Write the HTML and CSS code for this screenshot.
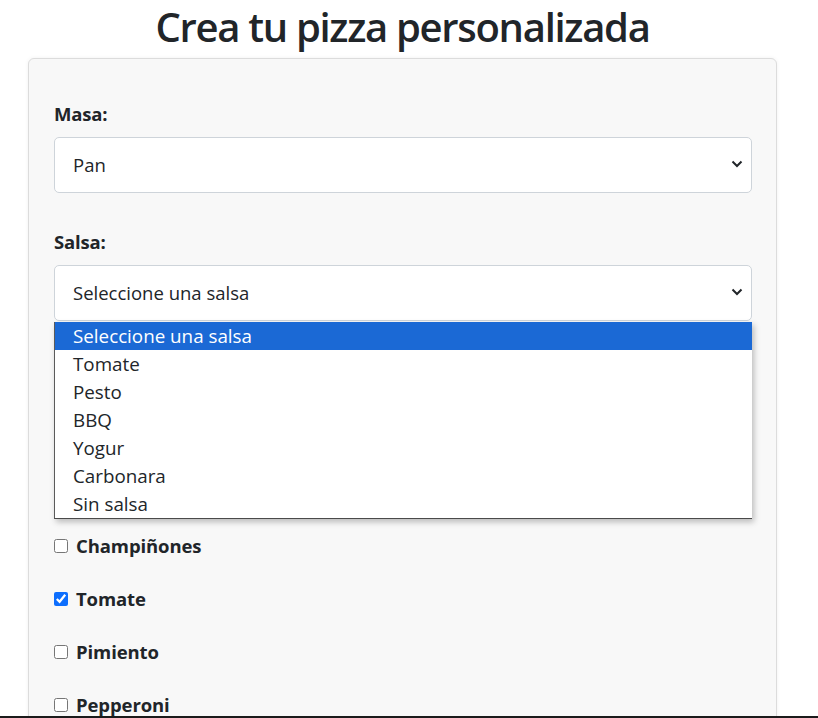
FILE: index.html
```html
<!DOCTYPE html>
<html lang="es">
<head>
<meta charset="utf-8">
<title>Crea tu pizza personalizada</title>
<link rel="stylesheet" href="styles.css">
</head>
<body>
<div class="page">
  <h1 class="title">Crea tu pizza personalizada</h1>
  <form class="card">
    <div class="group">
      <label class="label">Masa:</label>
      <div class="select">
        <span>Pan</span>
        <svg class="chev" viewBox="0 0 12 8" width="12" height="8"><path d="M1.5 1.5 L6 6 L10.5 1.5" fill="none" stroke="#212529" stroke-width="2"/></svg>
      </div>
    </div>
    <div class="group salsa">
      <label class="label">Salsa:</label>
      <div class="select">
        <span>Seleccione una salsa</span>
        <svg class="chev" viewBox="0 0 12 8" width="12" height="8"><path d="M1.5 1.5 L6 6 L10.5 1.5" fill="none" stroke="#212529" stroke-width="2"/></svg>
      </div>
      <ul class="popup">
        <li class="opt active">Seleccione una salsa</li>
        <li class="opt">Tomate</li>
        <li class="opt">Pesto</li>
        <li class="opt">BBQ</li>
        <li class="opt">Yogur</li>
        <li class="opt">Carbonara</li>
        <li class="opt">Sin salsa</li>
      </ul>
    </div>
    <div class="group">
      <label class="label">Ingredientes:</label>
      <div class="checks">
        <label class="check"><input type="checkbox"> Queso</label>
        <label class="check"><input type="checkbox"> Jamón</label>
        <label class="check"><input type="checkbox"> Champiñones</label>
        <label class="check"><input type="checkbox" checked> Tomate</label>
        <label class="check"><input type="checkbox"> Pimiento</label>
        <label class="check"><input type="checkbox"> Pepperoni</label>
      </div>
    </div>
  </form>
</div>
<div class="edge"></div>
</body>
</html>
```
FILE: styles.css
```css
html, body {
  margin: 0;
  padding: 0;
  background: #ffffff;
  overflow: hidden;
}
body {
  font-family: "Open Sans", "Noto Sans", "Liberation Sans", sans-serif;
  color: #212529;
  font-size: 18.5px;
  line-height: 26px;
}
.page {
  width: 749px;
  margin-left: 28px;
}
.title {
  margin: 0;
  height: 58px;
  text-align: center;
  font-size: 40px;
  font-weight: 600;
  line-height: 54px;
  letter-spacing: -1.3px;
}
.card {
  display: flex;
  flex-direction: column;
  gap: 36px;
  background: #f8f8f8;
  border: 1px solid #dcdcdc;
  border-radius: 6px;
  box-shadow: 0 0 4px rgba(0,0,0,0.06);
  padding: 42px 24px 40px 25px;
}
.group {
  display: flex;
  flex-direction: column;
  gap: 10px;
  position: relative;
}
.label {
  font-weight: 700;
  letter-spacing: -0.2px;
}
.select {
  display: flex;
  align-items: center;
  justify-content: space-between;
  height: 54px;
  padding: 0 8px 0 18px;
  background: #ffffff;
  border: 1px solid #ced4da;
  border-radius: 5px;
}
.chev {
  margin-top: -2px;
}
.popup {
  position: absolute;
  left: 0;
  right: 0;
  top: 100%;
  margin: 1px 0 0;
  padding: 0;
  list-style: none;
  background: #ffffff;
  border-left: 1px solid #5a5a5a;
  border-bottom: 1px solid #4a4a4a;
  box-shadow: 2px 3px 6px rgba(0,0,0,0.25);
  z-index: 5;
}
.opt {
  height: 28px;
  line-height: 28px;
  padding-left: 18px;
  font-size: 18.8px;
}
.opt.active {
  background: #1b69d5;
  color: #ffffff;
}
.checks {
  display: flex;
  flex-direction: column;
  gap: 27px;
  margin-top: 34px;
}
.check {
  display: flex;
  align-items: center;
  font-weight: 700;
  letter-spacing: -0.1px;
  height: 26px;
}
.check input {
  width: 14px;
  height: 14px;
  margin: 0 8px 0 0;
  accent-color: #0d6efd;
}
.edge {
  position: fixed;
  left: 0;
  right: 0;
  bottom: 0;
  height: 2px;
  background: #1b1b1b;
}
```
